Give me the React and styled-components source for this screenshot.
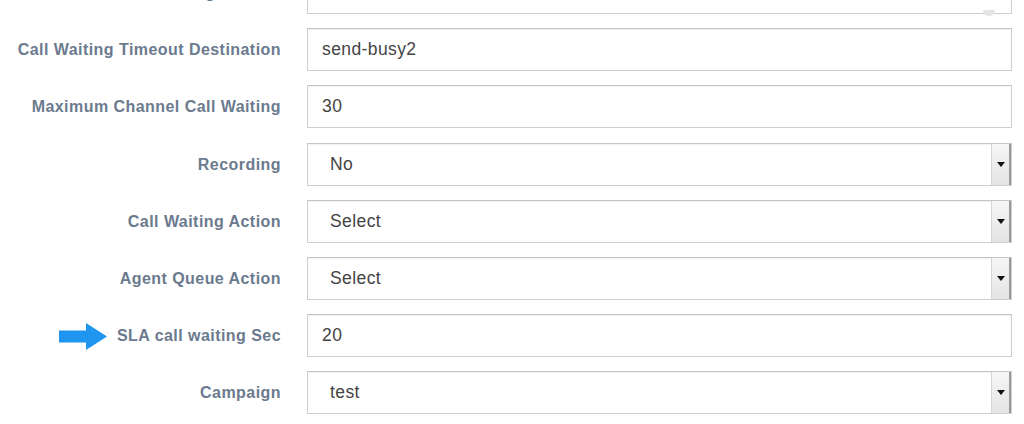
import React from "react";
import styled, { createGlobalStyle } from "styled-components";

const GlobalStyle = createGlobalStyle`
  html, body {
    margin: 0;
    padding: 0;
    background: #fff;
    overflow: hidden;
  }
  body {
    font-family: "Liberation Sans", Arial, sans-serif;
  }
`;

const Form = styled.form`
  display: flex;
  flex-direction: column;
  gap: 14.2px;
  margin-top: -29px;
  width: 1012px;
`;

const Row = styled.div`
  display: grid;
  grid-template-columns: 281px 705px;
  column-gap: 26px;
  align-items: center;
  height: 43px;
`;

const LabelCell = styled.div`
  display: flex;
  align-items: center;
  justify-content: flex-end;
  gap: 10px;
  padding-top: 1px;
`;

const Label = styled.label`
  color: #6b7a8e;
  font-size: 16px;
  font-weight: 700;
  letter-spacing: 0.45px;
  white-space: nowrap;
`;

const Field = styled.div`
  position: relative;
  box-sizing: border-box;
  height: 43px;
  border: 1px solid #cfcfcf;
  border-top-color: #c4c4c4;
  box-shadow: inset 0 1px 1px rgba(0, 0, 0, 0.06);
  background: #fff;
  display: flex;
  align-items: center;
  padding-left: ${(p) => (p.$select ? "22px" : "14px")};
  color: #444;
  font-size: 17.5px;
  letter-spacing: 0.4px;
`;

const ArrowButton = styled.div`
  position: absolute;
  top: 0;
  right: 0;
  bottom: 0;
  width: 20px;
  box-sizing: border-box;
  border-left: 1px solid #d6d6d6;
  border-right: 2px solid #9a9a9a;
  background: linear-gradient(#f6f6f6, #e4e4e4);
  display: flex;
  align-items: center;
  justify-content: center;

  &::after {
    content: "";
    border-left: 4px solid transparent;
    border-right: 4px solid transparent;
    border-top: 5px solid #111;
  }
`;

const NativeArrow = styled.div`
  position: absolute;
  right: 16px;
  bottom: -3px;
  width: 12px;
  height: 6px;
  border-radius: 0 0 6px 6px;
  background: #e4e4e4;
`;

const Pointer = () => (
  <svg width="48" height="27" viewBox="0 0 48 27" aria-hidden="true">
    <path d="M0 7.5 H27 V0 L48 13.5 L27 27 V19.5 H0 Z" fill="#1e96f0" />
  </svg>
);

const rows = [
  { label: "Ring Interval", value: "", select: "native" },
  { label: "Call Waiting Timeout Destination", value: "send-busy2" },
  { label: "Maximum Channel Call Waiting", value: "30" },
  { label: "Recording", value: "No", select: true },
  { label: "Call Waiting Action", value: "Select", select: true },
  { label: "Agent Queue Action", value: "Select", select: true },
  { label: "SLA call waiting Sec", value: "20", marked: true },
  { label: "Campaign", value: "test", select: true },
];

const App = () => {
  return (
    <>
      <GlobalStyle />
      <Form>
        {rows.map((r) => (
          <Row key={r.label}>
            <LabelCell>
              {r.marked && <Pointer />}
              <Label>{r.label}</Label>
            </LabelCell>
            <Field $select={r.select === true}>
              {r.value}
              {r.select === true && <ArrowButton />}
              {r.select === "native" && <NativeArrow />}
            </Field>
          </Row>
        ))}
      </Form>
    </>
  );
};

export default App;
